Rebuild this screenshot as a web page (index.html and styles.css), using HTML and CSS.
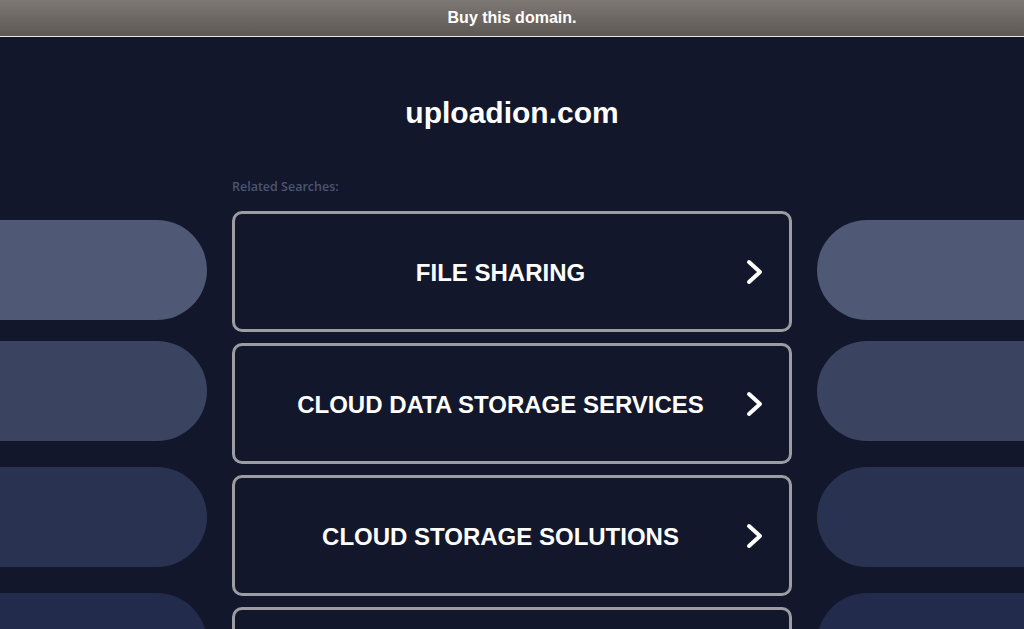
FILE: index.html
```html
<!DOCTYPE html>
<html lang="en">
<head>
    <meta charset="UTF-8">
    <meta name="viewport" content="width=device-width, initial-scale=1.0">
    <title>uploadion.com</title>
    <link rel="stylesheet" href="styles.css">
</head>
<body>
    <!-- Sale banner -->
    <div class="top-bar">
        <a href="#" class="buy-link">Buy this domain.</a>
    </div>

    <div class="page">
        <!-- Left decoration -->
        <div class="side side-left">
            <div class="pill pill-1"></div>
            <div class="pill pill-2"></div>
            <div class="pill pill-3"></div>
            <div class="pill pill-4"></div>
        </div>

        <div class="main">
            <h1 class="domain">uploadion.com</h1>
            <p class="related-title">Related Searches:</p>

            <div class="link-list">
                <a href="#" class="link-box">
                    <span class="link-text">FILE SHARING</span>
                    <svg class="chevron" viewBox="0 0 18 26" width="18" height="26"><path d="M3 3 L14 13 L3 23" fill="none" stroke="#fff" stroke-width="4" stroke-linecap="round" stroke-linejoin="round"/></svg>
                </a>
                <a href="#" class="link-box">
                    <span class="link-text">CLOUD DATA STORAGE SERVICES</span>
                    <svg class="chevron" viewBox="0 0 18 26" width="18" height="26"><path d="M3 3 L14 13 L3 23" fill="none" stroke="#fff" stroke-width="4" stroke-linecap="round" stroke-linejoin="round"/></svg>
                </a>
                <a href="#" class="link-box">
                    <span class="link-text">CLOUD STORAGE SOLUTIONS</span>
                    <svg class="chevron" viewBox="0 0 18 26" width="18" height="26"><path d="M3 3 L14 13 L3 23" fill="none" stroke="#fff" stroke-width="4" stroke-linecap="round" stroke-linejoin="round"/></svg>
                </a>
                <!-- fourth box only peeks in at the bottom edge -->
                <a href="#" class="link-box"></a>
            </div>
        </div>

        <!-- Right decoration -->
        <div class="side side-right">
            <div class="pill pill-1"></div>
            <div class="pill pill-2"></div>
            <div class="pill pill-3"></div>
            <div class="pill pill-4"></div>
        </div>
    </div>
</body>
</html>
```

FILE: styles.css
```css
body {
    margin: 0;
    padding: 0;
    background-color: #12172b;
    font-family: 'Liberation Sans', Arial, sans-serif;
    color: #fff;
    height: 629px;
    overflow: hidden;
}

/* Top banner */
.top-bar {
    height: 36px;
    background: linear-gradient(to bottom, #7d7874, #5d5853);
    border-bottom: 1px solid #e8e8e8;
    display: flex;
    justify-content: center;
    align-items: center;
}

.buy-link {
    color: #fff;
    font-weight: bold;
    font-size: 16px;
    line-height: 18px;
    text-decoration: none;
}

/* Three columns: pills | links | pills */
.page {
    display: flex;
    justify-content: space-between;
}

.side {
    width: 207px;
    padding-top: 183px;
    display: flex;
    flex-direction: column;
}

.pill {
    height: 100px;
    flex-shrink: 0;
}

.side-left .pill {
    border-radius: 0 50px 50px 0;
}

.side-right .pill {
    border-radius: 50px 0 0 50px;
}

.pill-1 {
    background-color: #4f5975;
}

.pill-2 {
    margin-top: 21px;
    background-color: #3a4461;
}

.pill-3 {
    margin-top: 26px;
    background-color: #293251;
}

.pill-4 {
    margin-top: 26px;
    background-color: #222b4b;
}

.main {
    width: 560px;
}

.domain {
    margin: 59px 0 0;
    text-align: center;
    font-size: 30px;
    line-height: 34px;
    font-weight: bold;
}

.related-title {
    margin: 49px 0 0;
    font-family: 'Open Sans', sans-serif;
    font-size: 12.5px;
    font-weight: 600;
    line-height: 16px;
    color: #4c5573;
}

.link-list {
    margin-top: 16px;
    display: flex;
    flex-direction: column;
    gap: 11px;
}

.link-box {
    box-sizing: border-box;
    height: 121px;
    border: 3px solid #9b9da3;
    border-radius: 10px;
    display: flex;
    align-items: center;
    padding-left: 20px;
    padding-top: 2px;
    text-decoration: none;
    color: #fff;
    flex-shrink: 0;
}

.link-text {
    flex: 1;
    text-align: center;
    font-size: 24px;
    font-weight: bold;
}

.chevron {
    margin-right: 25px;
    margin-top: -2px;
    flex-shrink: 0;
}
```
